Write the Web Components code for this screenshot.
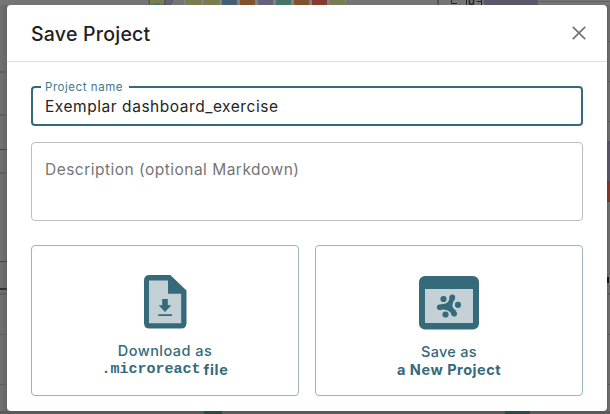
<!DOCTYPE html>
<html lang="en">
<head>
<meta charset="utf-8">
<title>Save Project</title>
<style>
html,body{margin:0;height:100%;overflow:hidden;background:#707070}
body{font-family:Inter,"Liberation Sans",sans-serif;color:#212121}
</style>
</head>
<body>
<save-page></save-page>
<script>
function define(name, html, setup) {
  customElements.define(name, class extends HTMLElement {
    constructor() {
      super();
      this.attachShadow({mode: 'open'}).innerHTML = html;
    }
    connectedCallback() { if (setup) setup(this); }
  });
}

/* One line of text, tracked so that it fills the width in its "w" attribute. */
define('tracked-text', `<style>:host{display:inline-block;white-space:pre}</style><span><slot></slot></span>`, el => {
  const span = el.shadowRoot.querySelector('span');
  const n = el.textContent.length;
  const extra = (+el.getAttribute('w') - span.getBoundingClientRect().width) / n;
  span.style.letterSpacing = extra.toFixed(3) + 'px';
});

define('dimmed-backdrop', `<style>
:host{position:absolute;inset:0}svg{display:block}
</style>
<svg width="610" height="414" viewBox="0 0 610 414" shape-rendering="crispEdges">
<defs><linearGradient id="l"><stop stop-color="#717171"/><stop offset="1" stop-color="#666"/></linearGradient>
<linearGradient id="r"><stop stop-color="#606060"/><stop offset="1" stop-color="#727272"/></linearGradient></defs>
<rect width="610" height="414" fill="#757575"/>
<rect y="5" width="7" height="406" fill="url(#l)"/>
<rect x="607" y="5" width="3" height="406" fill="url(#r)"/>
<g fill="#5f5f5f"><path d="M0 71h7v2H0zM0 114h7v2H0zM0 172h7v2H0zM0 293h7v2H0zM0 334h7v1H0zM0 384h7v1H0z"/></g>
<path fill="#444" d="M0 149h7v1H0zM0 261h7v1H0z"/><path fill="#333" d="M0 288h7v2H0z"/>
<path fill="#5b5b5b" d="M607 41h3v1h-3zM607 81h3v1h-3zM607 121h3v1h-3zM607 293h3v2h-3zM607 334h3v1h-3zM607 384h3v1h-3z"/>
<rect x="607" y="141" width="3" height="40" fill="#565263"/><rect x="607" y="181" width="3" height="20" fill="#7c3630"/>
<rect x="607" y="201" width="3" height="1" fill="#444"/><rect x="607" y="277" width="2" height="6" fill="#151515"/>
<g shape-rendering="auto"><circle cx="167" cy="-1" r="6" fill="#66617a" stroke="#55515f"/><circle cx="157" cy="1" r="8" fill="#7d7b50" stroke="#4b4b48"/><ellipse cx="157" cy="5" rx="5" ry="2" fill="#437a70"/></g>
<rect x="184" width="162" height="5" fill="#808080"/>
<path fill="#7b7b50" d="M186 0h15v5h-15zM204 0h15v5h-15zM330 0h15v5h-15z"/>
<path fill="#435f78" d="M222 0h15v5h-15z"/><path fill="#80522c" d="M240 0h15v5h-15zM294 0h15v5h-15z"/>
<path fill="#64617a" d="M258 0h15v5h-15z"/><path fill="#477468" d="M276 0h15v5h-15z"/><path fill="#863a33" d="M312 0h15v5h-15z"/>
<path fill="#555" d="M437 0h2v5h-2z"/><rect x="484" width="54" height="5" fill="#5b5769"/>
<path fill="#626262" d="M538 1h72v1h-72z"/>
<path d="M451.500 0v3.500h5.500M466.500 0v5M477 1.500h5M481.500 0v5" stroke="#252525" fill="none" shape-rendering="auto"/>
<path d="M469.500 0v3q0 1.500 2 1.500t2-1.500v-3" stroke="#252525" stroke-width="1.500" fill="none" shape-rendering="auto"/>
<rect y="411" width="610" height="3" fill="#595b58"/>
<path fill="#2b4c45" d="M204 411h18v3h-18zM505 411h25v3h-25z"/>
</svg>`);

define('outlined-field', `<style>
:host{display:block;position:relative;box-sizing:border-box;border:1px solid #bebebe;border-radius:4px;padding:17px 13px;height:79px;font-size:15.5px;line-height:20px;color:#757575}
:host([focused]){border:2px solid #356a7a;height:40px;padding:9px 12px 7px;color:#242424}
.label{display:none;position:absolute;left:8px;top:-9px;width:88px;height:16px;box-sizing:border-box;padding-left:4px;background:#fff;color:#477887;font-size:11.5px;line-height:16px}
:host([focused]) .label{display:block}
</style><div class="label"><slot name="label"></slot></div><slot></slot>`);

define('close-button', `<style>:host{display:block;width:14px;height:14px}svg{display:block}</style>
<svg width="14" height="14" viewBox="0 0 14 14"><path d="M.8.800 13.200 13.200M13.200.8.800 13.200" stroke="#757575" stroke-width="1.700"/></svg>`);

define('file-icon', `<style>:host{display:block}svg{display:block}</style>
<svg width="60" height="60" viewBox="0 0 60 60">
<path d="M14.500 4h20.800l16.200 15.500v32.500q0 5.500-5.500 5.500h-31.500q-5.500 0-5.500-5.500V9.500q0-5.500 5.500-5.500z" fill="#356a7a"/>
<path d="M14 9.500h19v13.200h13.200v29.500H14z" fill="#c3d1d6"/>
<path d="M27.200 28h5.600v6.300h3.600L30 41l-6.400-6.700h3.600zM23.200 43.200h13.800v1.800h-13.800z" fill="#356a7a"/>
</svg>`);

define('window-icon', `<style>:host{display:block}svg{display:block}</style>
<svg width="60" height="60" viewBox="0 0 60 60">
<rect y="5" width="60" height="53.500" rx="6" fill="#356a7a"/><path d="M6 18h48v34H6z" fill="#c3d1d6"/>
<g fill="#356a7a" transform="translate(0 1)"><circle cx="24.500" cy="27" r="3.100"/><circle cx="39" cy="32.800" r="3.100"/><circle cx="26.500" cy="42.500" r="3.100"/>
<circle cx="33.300" cy="25.200" r="2.800"/><circle cx="20.700" cy="35.200" r="2.800"/><circle cx="35.200" cy="41.700" r="2.800"/>
<path d="M30.700 24.600q-.2 5.500-4.100 7-3 1-5.900.8v5.600q4.200-.9 7.200.2 3.800 1.300 4.700 4.600l4.800-4q-4.500-2.400-4-5.700.3-3.300 2.600-6.200z"/></g>
</svg>`);

define('choice-card', `<style>
:host{display:flex;flex-direction:column;align-items:center;box-sizing:border-box;height:151px;border:1px solid #9ab4bc;border-radius:4px;padding-top:25px;color:#356a7a;font-size:14.5px;font-weight:500;line-height:18px}
.line{height:18px;white-space:pre}.text{padding-top:12px;display:flex;flex-direction:column;align-items:center}
.bold{font-weight:700}
:host([raised]) .text{padding-top:11px}
:host([raised]) .bold{padding-top:1px}
</style><slot name="icon"></slot><div class="text"><div class="line"><slot></slot></div><div class="line bold"><slot name="bold"></slot></div></div>`);

define('save-dialog', `<style>
:host{display:block;position:absolute;left:7px;top:5px;width:600px;height:406px;box-sizing:border-box;background:#fff;border-radius:4px}
header{height:57px;box-sizing:border-box;border-bottom:1px solid #e0e0e0;display:flex;align-items:center;justify-content:space-between;padding:0 21px 0 24px;font-size:19.5px;font-weight:500;line-height:28px}
header tracked-text{padding-top:2px}
main{padding:24px 24px 0;display:flex;flex-direction:column;gap:16px}
.cards{display:grid;grid-template-columns:1fr 1fr;gap:16px;padding-top:8px}
.mono{font-family:"Liberation Mono",monospace;font-size:15px}
[slot=bold]{display:flex;gap:3px}
</style>
<header><tracked-text w="119.500">Save Project</tracked-text><close-button></close-button></header>
<main>
<outlined-field focused><tracked-text slot="label" w="78">Project name</tracked-text><tracked-text w="233.500">Exemplar dashboard_exercise</tracked-text></outlined-field>
<outlined-field><tracked-text w="254.500">Description (optional Markdown)</tracked-text></outlined-field>
<div class="cards">
<choice-card raised><file-icon slot="icon"></file-icon><tracked-text w="94.500">Download as</tracked-text><span slot="bold"><tracked-text class="mono" w="99">.microreact</tracked-text><tracked-text w="25">file</tracked-text></span></choice-card>
<choice-card><window-icon slot="icon"></window-icon><tracked-text w="56">Save as</tracked-text><tracked-text slot="bold" w="104">a New Project</tracked-text></choice-card>
</div>
</main>`);

define('save-page', `<style>:host{display:block;position:relative;width:610px;height:414px;overflow:hidden}</style>
<dimmed-backdrop></dimmed-backdrop><save-dialog></save-dialog>`);
</script>
</body>
</html>
